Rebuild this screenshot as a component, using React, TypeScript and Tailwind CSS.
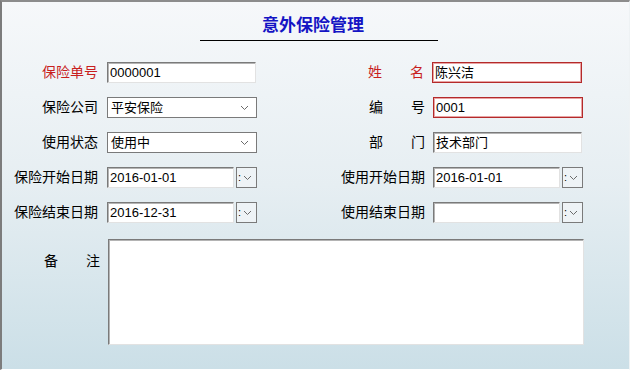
const sunken =
  "border border-t-[#7a7a7a] border-l-[#7a7a7a] border-r-[#e2e2e2] border-b-[#e2e2e2] shadow-[inset_1px_1px_0_#b4b4b4] bg-white";
const redBox = "border border-[#b42a2a] shadow-[inset_0_0_0_1px_#e8a4a4] bg-white";

function Chevron() {
  return (
    <svg width="9" height="6" viewBox="0 0 9 6" className="shrink-0">
      <polyline points="1,1 4.5,4.5 8,1" fill="none" stroke="#6b6b6b" strokeWidth="1" />
    </svg>
  );
}

function TextBox({ value, red, w }: { value: string; red?: boolean; w: string }) {
  return (
    <div className={`${w} h-[21px] flex items-center pl-[2px] text-[13px] text-black ${red ? redBox : sunken}`}>
      {value}
    </div>
  );
}

function SelectBox({ value }: { value: string }) {
  return (
    <div className="w-[150px] h-[21px] flex items-center justify-between pl-[3px] pr-[7px] border border-[#7a7a7a] bg-white text-[13px] text-black">
      <span>{value}</span>
      <Chevron />
    </div>
  );
}

function DateBox({ value }: { value: string }) {
  return (
    <div className="w-[150px] h-[21px] flex items-center gap-[2px]">
      <div className={`flex-1 h-[21px] flex items-center pl-[2px] text-[13px] text-black ${sunken}`}>{value}</div>
      <div className="w-[21px] h-[21px] border border-[#7a7a7a] bg-[#eef3f6] flex items-center gap-[2px] pl-[1px]">
        <span className="text-[11px] leading-none text-black">:</span>
        <Chevron />
      </div>
    </div>
  );
}

function Label({ text, red, spread }: { text: string; red?: boolean; spread?: boolean }) {
  const color = red ? "text-[#c81e1e]" : "text-black";
  if (spread) {
    const [a, b] = text.split("");
    return (
      <div className={`w-[56px] flex justify-between text-[14px] ${color}`}>
        <span>{a}</span>
        <span>{b}</span>
      </div>
    );
  }
  return <div className={`text-[14px] whitespace-nowrap ${color}`}>{text}</div>;
}

function Row({ left, right }: { left: [React.ReactNode, React.ReactNode]; right: [React.ReactNode, React.ReactNode] }) {
  return (
    <div className="flex items-center h-[21px]">
      <div className="w-[96px] flex justify-end">{left[0]}</div>
      <div className="ml-[9px]">{left[1]}</div>
      <div className="w-[112px]" />
      <div className="w-[56px] flex justify-end">{right[0]}</div>
      <div className="ml-[8px]">{right[1]}</div>
    </div>
  );
}

export default function App() {
  return (
    <div
      className="w-[630px] h-[370px] overflow-hidden border-l-2 border-t-2 border-l-[#7c7c7c] border-t-[#8c8c8c] border-r border-b border-r-[#eef2f4] border-b-white bg-gradient-to-b from-[#f6f8fa] via-[#e6eef2] to-[#cbdfe7]"
      style={{ fontFamily: '"Liberation Sans", "Noto Sans CJK SC", sans-serif' }}
    >
      <div className="ml-[198px] w-[238px] border-b border-black pt-[13px] pb-[3px] pl-[62px] leading-[22px] text-[17px] font-bold text-[#1414c4]">
        意外保险管理
      </div>

      <div className="mt-[21px] flex flex-col gap-[14px]">
        <Row
          left={[<Label text="保险单号" red />, <TextBox value="0000001" w="w-[149px]" />]}
          right={[<Label text="姓名" red spread />, <TextBox value="陈兴洁" red w="w-[150px]" />]}
        />
        <Row
          left={[<Label text="保险公司" />, <SelectBox value="平安保险" />]}
          right={[<Label text="编号" spread />, <TextBox value="0001" red w="w-[150px]" />]}
        />
        <Row
          left={[<Label text="使用状态" />, <SelectBox value="使用中" />]}
          right={[<Label text="部门" spread />, <TextBox value="技术部门" w="w-[149px]" />]}
        />
        <Row
          left={[<Label text="保险开始日期" />, <DateBox value="2016-01-01" />]}
          right={[<Label text="使用开始日期" />, <DateBox value="2016-01-01" />]}
        />
        <Row
          left={[<Label text="保险结束日期" />, <DateBox value="2016-12-31" />]}
          right={[<Label text="使用结束日期" />, <DateBox value="" />]}
        />
      </div>

      <div className="mt-[16px] flex items-start">
        <div className="w-[98px] flex justify-end pt-[12px]">
          <Label text="备注" spread />
        </div>
        <div className={`ml-[8px] w-[476px] h-[106px] ${sunken}`} />
      </div>
    </div>
  );
}
